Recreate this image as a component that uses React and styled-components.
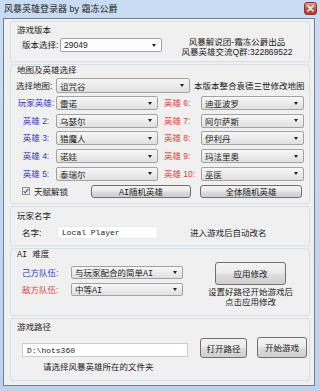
import React from "react";
import styled, { createGlobalStyle } from "styled-components";

const sans = `"Liberation Sans", "Noto Sans CJK SC", sans-serif`;
const mono = `"Liberation Mono", "Noto Sans CJK SC", monospace`;

const GlobalStyle = createGlobalStyle`
  html, body {
    margin: 0;
    padding: 0;
    background: #c4d8ee;
  }
  body {
    font-family: ${sans};
    font-size: 8.5px;
    color: #1c1c1c;
  }
  * {
    box-sizing: border-box;
  }
`;

const Window = styled.div`
  width: 320px;
  height: 391px;
  background: linear-gradient(#cadcf1, #bdd3eb);
  display: flex;
  flex-direction: column;
  overflow: hidden;
`;

const TitleBar = styled.div`
  height: 18px;
  flex: none;
  display: flex;
  align-items: center;
  justify-content: space-between;
  padding: 0 3px 0 4px;
`;

const Title = styled.div`
  font-size: 9px;
  line-height: 12px;
  color: #1e1e1e;
`;

const CloseBtn = styled.div`
  width: 13px;
  height: 13px;
  margin-top: -1px;
  border: 1px solid #8a342a;
  border-radius: 3px;
  background: linear-gradient(#e8a093, #c9503f 55%, #b83a2b);
  display: flex;
  align-items: center;
  justify-content: center;
`;

const Client = styled.div`
  flex: 1;
  margin: 0 5px 5px 3px;
  border: 1px solid #6f8095;
  background: #f0f0f0;
  padding: 2px 4px 0 6px;
  display: flex;
  flex-direction: column;
  gap: 2px;
`;

const Group = styled.div`
  flex: none;
  height: ${(p) => p.$h}px;
  border: 1px solid #d5dfe5;
  border-radius: 3px;
  padding: ${(p) => p.$pt}px 0 0 5px;
`;

const GroupTitle = styled.div`
  line-height: 11px;
  margin-left: 1px;
  font-family: ${(p) => (p.$mono ? mono : sans)};
`;

const Row = styled.div`
  display: flex;
  align-items: center;
  height: ${(p) => p.$h || 14}px;
  margin-top: ${(p) => p.$mt || 0}px;
  margin-left: ${(p) => p.$ml || 0}px;
`;

const Label = styled.div`
  flex: none;
  width: ${(p) => p.$w}px;
  color: ${(p) => p.$color || "#1c1c1c"};
  text-align: ${(p) => p.$align || "left"};
  padding-left: ${(p) => p.$pl || 0}px;
  white-space: nowrap;
  line-height: 12px;
`;

const Combo = styled.div`
  flex: none;
  width: ${(p) => p.$w}px;
  height: ${(p) => p.$h || 14}px;
  border: 1px solid #a3a3a3;
  border-radius: 2px;
  background: ${(p) =>
    p.$white
      ? "#fdfdfd"
      : "linear-gradient(#f7f7f7, #ececec 50%, #e0e0e0)"};
  display: flex;
  align-items: center;
  padding-left: 3px;
  font-family: ${(p) => (p.$mono ? mono : sans)};
  white-space: nowrap;
  overflow: hidden;
`;

const Arrow = styled.span`
  flex: none;
  margin-left: auto;
  margin-right: 5px;
  width: 0;
  height: 0;
  border-left: 2.5px solid transparent;
  border-right: 2.5px solid transparent;
  border-top: 3px solid #222;
`;

const Note = styled.div`
  flex: none;
  margin-left: ${(p) => p.$ml || 0}px;
  margin-top: ${(p) => p.$mt || 0}px;
  line-height: 10px;
  white-space: nowrap;
`;

const TopRow = styled.div`
  display: flex;
`;

const LeftCol = styled.div`
  flex: none;
  width: ${(p) => p.$w}px;
  display: flex;
  flex-direction: column;
`;

const Credits = styled.div`
  flex: none;
  width: 126px;
  margin-top: 12.5px;
  text-align: center;
  line-height: 10px;
`;

const HeroGrid = styled.div`
  display: grid;
  grid-template-columns: 40px 102px 43px 103px;
  grid-auto-rows: 14px;
  row-gap: 3.7px;
  margin-top: 3px;
  align-items: center;
`;

const CheckWrap = styled.div`
  flex: none;
  width: 75px;
  padding-left: 6px;
  display: flex;
  align-items: center;
  gap: 4px;
`;

const CheckBox = styled.div`
  width: 8px;
  height: 8px;
  border: 1px solid #8e8f8f;
  background: linear-gradient(#eaeaea, #fbfbfb);
  display: flex;
  align-items: center;
  justify-content: center;
`;

const Button = styled.div`
  flex: none;
  width: ${(p) => p.$w}px;
  height: ${(p) => p.$h}px;
  margin-left: ${(p) => p.$ml || 0}px;
  margin-top: ${(p) => p.$mt || 0}px;
  border: 1px solid #707070;
  border-radius: 3px;
  background: linear-gradient(#f3f3f3, #ebebeb 48%, #dddddd 52%, #cfcfcf);
  display: flex;
  align-items: center;
  justify-content: center;
  font-family: ${mono};
  white-space: nowrap;
`;

const TextBox = styled.div`
  flex: none;
  width: ${(p) => p.$w}px;
  height: ${(p) => p.$h}px;
  margin-left: ${(p) => p.$ml || 0}px;
  margin-top: ${(p) => p.$mt || 0}px;
  background: #ffffff;
  border: 1px solid ${(p) => p.$border};
  display: flex;
  align-items: center;
  padding-left: 4px;
  font-family: ${mono};
  font-size: 8px;
  white-space: nowrap;
`;

const RightCol = styled.div`
  flex: none;
  width: 95px;
  margin-left: 20px;
  display: flex;
  flex-direction: column;
  align-items: center;
`;

const BLUE = "#3434c4";
const RED = "#e03a3a";

const heroes = [
  ["玩家英雄:", "雷诺", "英雄 6:", "迪亚波罗"],
  ["英雄 2:", "乌瑟尔", "英雄 7:", "阿尔萨斯"],
  ["英雄 3:", "猎魔人", "英雄 8:", "伊利丹"],
  ["英雄 4:", "诺娃", "英雄 9:", "玛法里奥"],
  ["英雄 5:", "泰瑞尔", "英雄 10:", "巫医"],
];

const ComboBox = ({ w, h, white, mono: m, children }) => (
  <Combo $w={w} $h={h} $white={white} $mono={m}>
    <span>{children}</span>
    <Arrow />
  </Combo>
);

const App = () => {
  return (
    <>
      <GlobalStyle />
      <Window>
        <TitleBar>
          <Title>风暴英雄登录器 by 霜冻公爵</Title>
          <CloseBtn>
            <svg width="7" height="7" viewBox="0 0 7 7">
              <path
                d="M1 1 L6 6 M6 1 L1 6"
                stroke="#fff"
                strokeWidth="1.6"
                strokeLinecap="round"
              />
            </svg>
          </CloseBtn>
        </TitleBar>

        <Client>
          <Group $h={41} $pt={2.5}>
            <TopRow>
              <LeftCol $w={158}>
                <GroupTitle>游戏版本</GroupTitle>
                <Row $mt={2.5} $ml={6}>
                  <Label $w={38}>版本选择:</Label>
                  <ComboBox w={102} white>
                    29049
                  </ComboBox>
                </Row>
              </LeftCol>
              <Credits>
                <div>风暴解说团-霜冻公爵出品</div>
                <div>风暴英雄交流Q群:322869522</div>
              </Credits>
            </TopRow>
          </Group>

          <Group $h={140} $pt={0}>
            <GroupTitle>地图及英雄选择</GroupTitle>
            <Row $h={15} $mt={2}>
              <Label $w={40}>选择地图:</Label>
              <ComboBox w={134} h={15}>
                诅咒谷
              </ComboBox>
              <Note $ml={4}>本版本整合袁德三世修改地图</Note>
            </Row>
            <HeroGrid>
              {heroes.map(([l1, h1, l2, h2]) => (
                <React.Fragment key={l1}>
                  <Label $w={40} $align="center" $color={BLUE}>
                    {l1}
                  </Label>
                  <ComboBox w={102}>{h1}</ComboBox>
                  <Label $w={43} $pl={6} $color={RED}>
                    {l2}
                  </Label>
                  <ComboBox w={103}>{h2}</ComboBox>
                </React.Fragment>
              ))}
            </HeroGrid>
            <Row $h={13} $mt={4}>
              <CheckWrap>
                <CheckBox>
                  <svg width="6" height="6" viewBox="0 0 6 6">
                    <path
                      d="M0.6 3.2 L2.3 4.9 L5.4 0.9"
                      fill="none"
                      stroke="#4b5f80"
                      strokeWidth="1.2"
                    />
                  </svg>
                </CheckBox>
                <span>天赋解锁</span>
              </CheckWrap>
              <Button $w={100} $h={13}>
                AI随机英雄
              </Button>
              <Button $w={102} $h={13} $ml={9}>
                全体随机英雄
              </Button>
            </Row>
          </Group>

          <Group $h={40} $pt={3.5}>
            <GroupTitle>玩家名字</GroupTitle>
            <Row $h={13} $mt={4.5} $ml={6}>
              <Label $w={35}>名字:</Label>
              <TextBox $w={101} $h={13} $border="#e6ebf0">
                Local Player
              </TextBox>
              <Note $ml={32}>进入游戏后自动改名</Note>
            </Row>
          </Group>

          <Group $h={68} $pt={0.5}>
            <GroupTitle $mono>AI 难度</GroupTitle>
            <TopRow>
              <LeftCol $w={167}>
                <Row $h={13} $mt={5.5} $ml={6}>
                  <Label $w={49} $color={BLUE}>
                    己方队伍:
                  </Label>
                  <ComboBox w={112} h={13} mono>
                    与玩家配合的简单AI
                  </ComboBox>
                </Row>
                <Row $h={13} $mt={4} $ml={6}>
                  <Label $w={49} $color={RED}>
                    敌方队伍:
                  </Label>
                  <ComboBox w={112} h={13} mono>
                    中等AI
                  </ComboBox>
                </Row>
              </LeftCol>
              <RightCol>
                <Button $w={71} $h={23} $mt={1.5}>
                  应用修改
                </Button>
                <Note $mt={2}>设置好路径开始游戏后</Note>
                <Note>点击应用修改</Note>
              </RightCol>
            </TopRow>
          </Group>

          <Group $h={63} $pt={2.5}>
            <GroupTitle>游戏路径</GroupTitle>
            <Row $h={21} $mt={4.5} style={{ alignItems: "flex-start" }}>
              <TextBox $w={166} $h={14} $ml={6} $mt={6} $border="#c9ced4">
                D:\hots360
              </TextBox>
              <Button $w={47} $h={20} $ml={12} $mt={1}>
                打开路径
              </Button>
              <Button $w={50} $h={21} $ml={10}>
                开始游戏
              </Button>
            </Row>
            <Note $ml={27} $mt={4}>
              请选择风暴英雄所在的文件夹
            </Note>
          </Group>
        </Client>
      </Window>
    </>
  );
};

export default App;
